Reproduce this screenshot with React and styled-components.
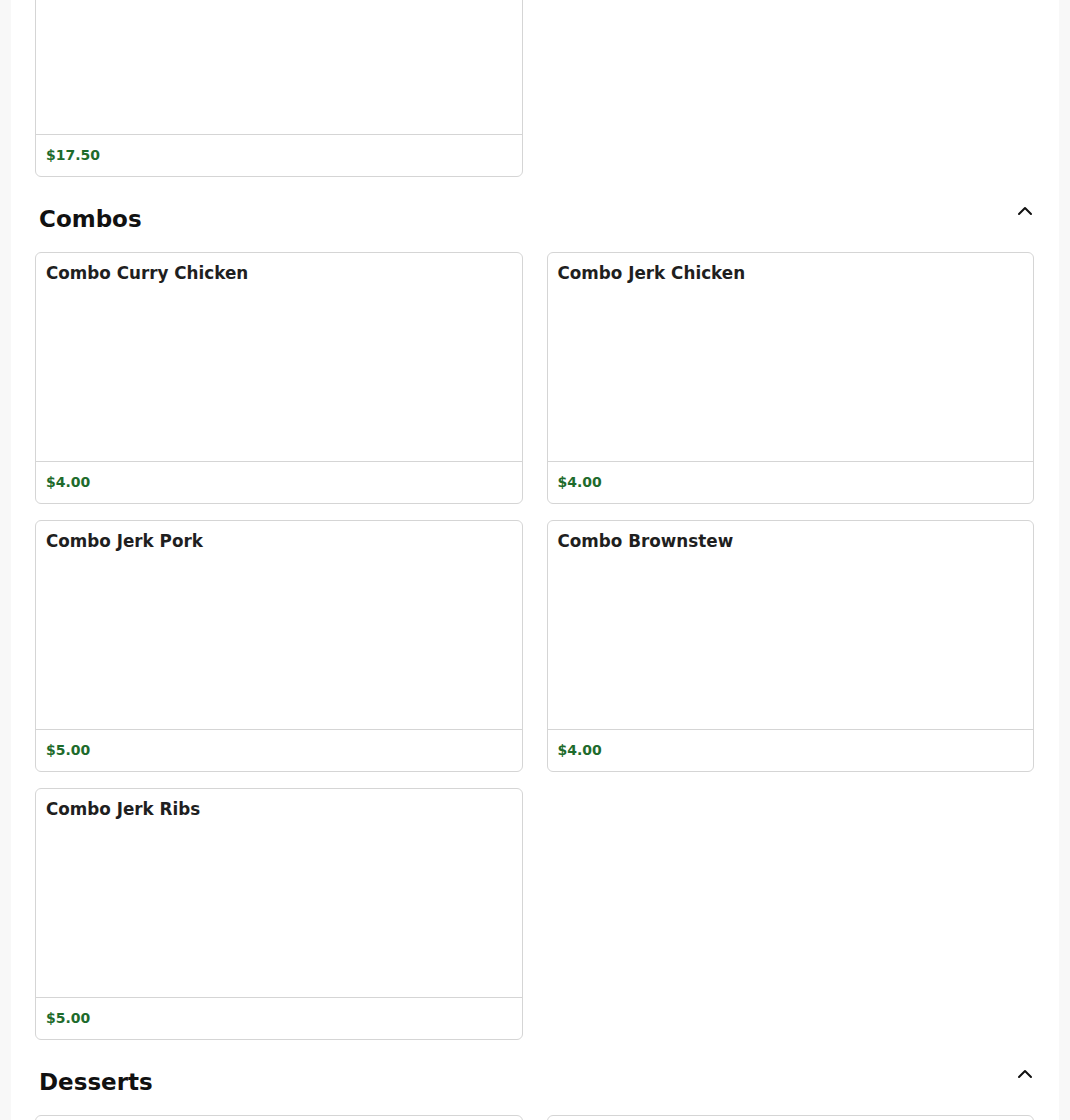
import React from "react";
import styled, { createGlobalStyle } from "styled-components";

const Global = createGlobalStyle`
  html, body {
    margin: 0;
    padding: 0;
    background: #f8f8f8;
    font-family: "DejaVu Sans", "Liberation Sans", sans-serif;
    color: #1c1c1c;
  }
  * { box-sizing: border-box; }
`;

const Panel = styled.main`
  max-width: 1048px;
  margin: 0 auto;
  background: #ffffff;
  padding: 0 25px 24px 24px;
  min-height: 100vh;
`;

const Section = styled.section`
  display: flex;
  flex-direction: column;
  margin-top: ${(p) => (p.$offset ? `${p.$offset}px` : "0")};
`;

const Header = styled.div`
  display: flex;
  justify-content: space-between;
  align-items: flex-start;
  padding-top: 22px;
  margin-bottom: 20px;
`;

const Title = styled.h2`
  margin: 7px 0 0 4px;
  font-size: 23px;
  line-height: normal;
  font-weight: 700;
  color: #111;
`;

const Toggle = styled.button`
  width: 24px;
  height: 24px;
  padding: 0;
  margin-right: -3px;
  border: none;
  background: transparent;
  color: #111;
  display: flex;
  align-items: center;
  justify-content: center;
  cursor: pointer;
`;

const Grid = styled.div`
  display: grid;
  grid-template-columns: 1fr 1fr;
  column-gap: 24px;
  row-gap: 16px;
`;

const Card = styled.article`
  border: 1px solid #d5d5d5;
  border-radius: 6px;
  background: #fff;
  display: flex;
  flex-direction: column;
  overflow: hidden;
`;

const CardBody = styled.div`
  height: 208px;
  padding: 10px;
`;

const ItemName = styled.h3`
  margin: 0;
  font-size: 16.8px;
  line-height: 20px;
  font-weight: 700;
  color: #1f1f1f;
`;

const CardFooter = styled.div`
  border-top: 1px solid #d5d5d5;
  padding: 10px;
  height: 42px;
`;

const Price = styled.span`
  font-size: 14px;
  line-height: 21px;
  font-weight: 700;
  color: #1e6b2c;
`;

const Chevron = () => (
  <svg width="24" height="24" viewBox="0 0 24 24" fill="none" stroke="currentColor"
    strokeWidth="2" strokeLinecap="round" strokeLinejoin="round">
    <path d="m18 15-6-6-6 6" />
  </svg>
);

const Item = ({ name, price }) => (
  <Card>
    <CardBody>{name && <ItemName>{name}</ItemName>}</CardBody>
    <CardFooter>{price && <Price>{price}</Price>}</CardFooter>
  </Card>
);

const combos = [
  { name: "Combo Curry Chicken", price: "$4.00" },
  { name: "Combo Jerk Chicken", price: "$4.00" },
  { name: "Combo Jerk Pork", price: "$5.00" },
  { name: "Combo Brownstew", price: "$4.00" },
  { name: "Combo Jerk Ribs", price: "$5.00" },
];

const MenuSection = ({ title, items }) => (
  <Section>
    <Header>
      <Title>{title}</Title>
      <Toggle aria-label="Collapse section">
        <Chevron />
      </Toggle>
    </Header>
    <Grid>
      {items.map((it, i) => (
        <Item key={i} {...it} />
      ))}
    </Grid>
  </Section>
);

export default function App() {
  return (
    <>
      <Global />
      <Panel>
        <Section $offset={-75}>
          <Grid>
            <Item price="$17.50" />
          </Grid>
        </Section>
        <MenuSection title="Combos" items={combos} />
        <MenuSection title="Desserts" items={[{}, {}]} />
      </Panel>
    </>
  );
}
